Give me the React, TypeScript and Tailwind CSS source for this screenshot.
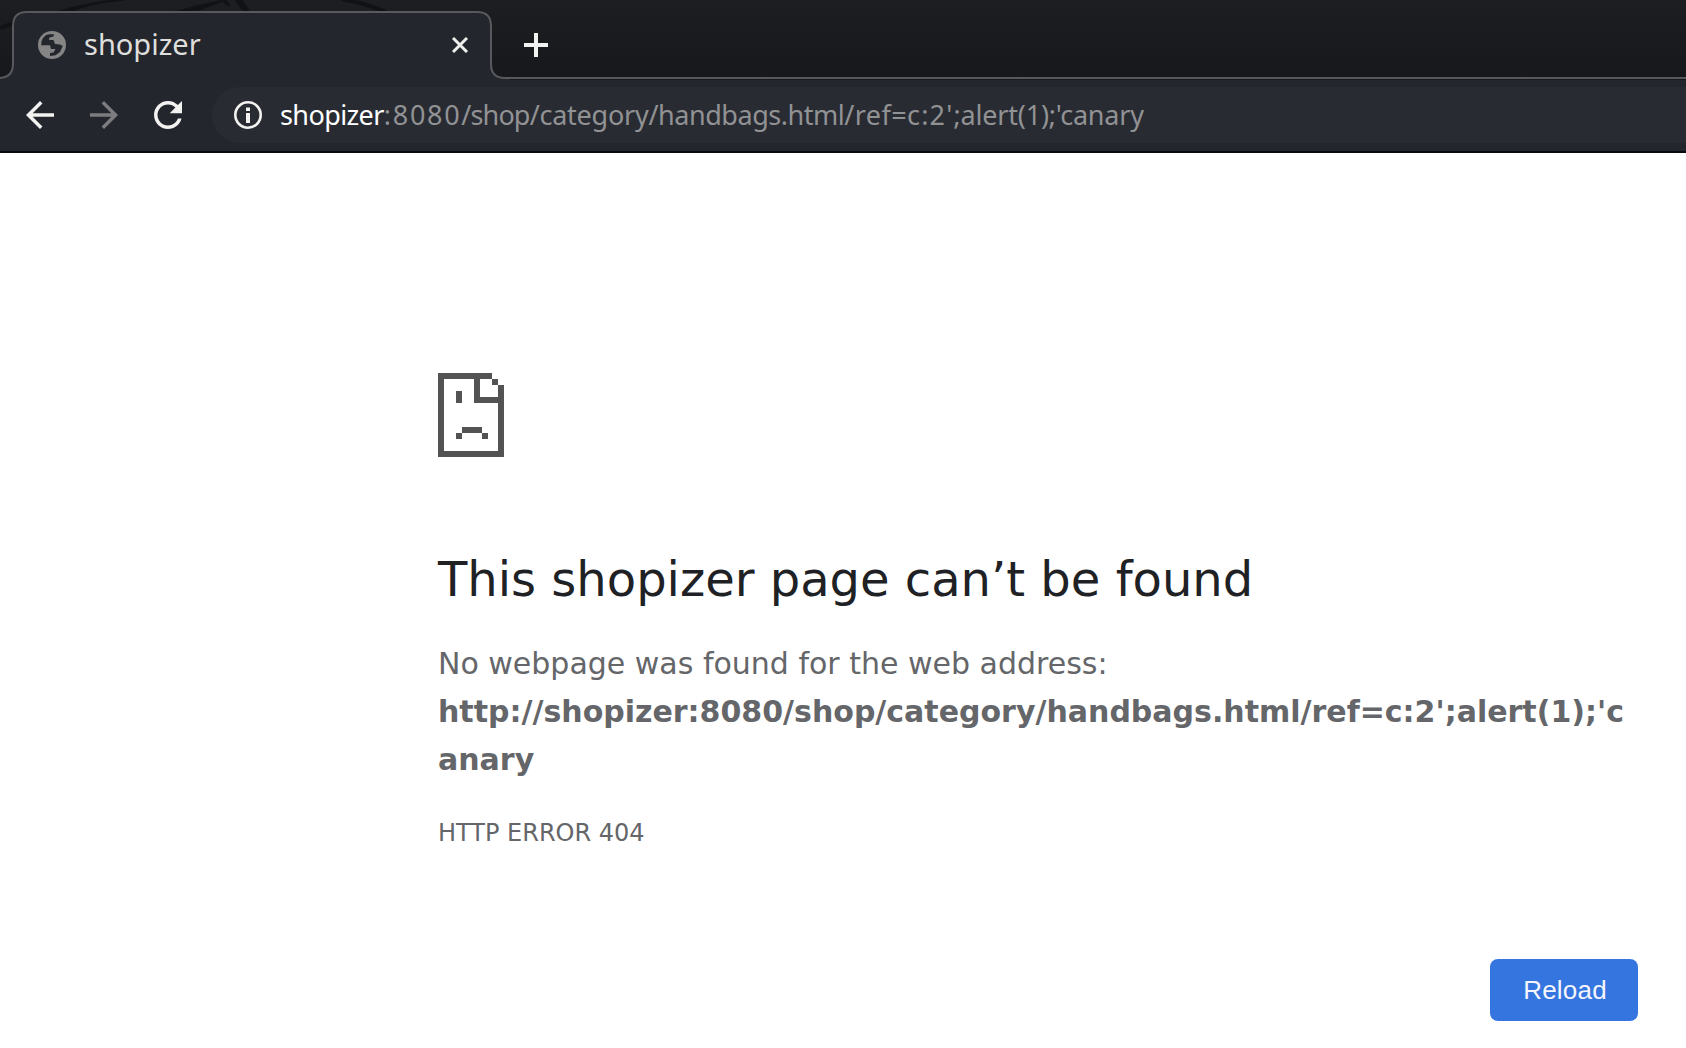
const STROKE = "#58595c";

function Wallpaper() {
  return (
    <svg className="absolute inset-0" width="520" height="80" viewBox="0 0 520 80" fill="none" aria-hidden="true">
      <path d="M0 28 L14 23" stroke="#111216" strokeWidth="4" />
      <path d="M58 12 Q90 2 135 -2 L105 2 Q80 6 70 12 Z" fill="#111216" stroke="#111216" strokeWidth="2" />
      <path d="M172 12 Q200 4 226 -1 L231 6 L228 6 L222 2 L195 12 Z" fill="#111216" />
      <path d="M237 -2 L247 12" stroke="#111216" strokeWidth="6" />
      <path d="M342 -1 Q368 4 386 12" stroke="#111216" strokeWidth="4" />
    </svg>
  );
}

function TabShape() {
  return (
    <svg className="absolute inset-0" width="510" height="80" viewBox="0 0 510 80" aria-hidden="true">
      <path
        d="M-2 78 H0 Q13 77 13 64 V26 Q13 12 27 12 H477 Q491 12 491 26 V64 Q491 78 505 78 H510 V80 H-2 Z"
        fill="#24262d"
      />
      <path
        d="M-2 78 H0 Q13 77 13 64 V26 Q13 12 27 12 H477 Q491 12 491 26 V64 Q491 78 505 78 H510"
        fill="none"
        stroke={STROKE}
        strokeWidth="2"
      />
    </svg>
  );
}

function Globe() {
  return (
    <svg width="28" height="28" viewBox="0 0 28 28" aria-hidden="true">
      <circle cx="14" cy="14" r="14" fill="#858585" />
      <path
        d="M5 7L8 4L11 3.2L16 3.2L15.5 5.5L11.5 6.5L11 9H15.5L17 13L22 13.5L24.8 15L22 21L17.5 24.2L12 25V22L15.5 21.5L17.5 18H13L12 14.2H3.2L3.6 10Z"
        fill="#24262d"
      />
    </svg>
  );
}

function Glyph({ d, color }: { d: string; color: string }) {
  return (
    <svg width="42" height="42" viewBox="0 0 24 24" fill={color} className="shrink-0" aria-hidden="true">
      <path d={d} />
    </svg>
  );
}

function SadPage() {
  return (
    <svg width="66" height="84" viewBox="0 0 66 84" fill="#535353" shapeRendering="crispEdges" aria-hidden="true">
      <path d="M0 0H54V6H6V78H60V12H66V84H0Z" />
      <path d="M54 6H60V12H54ZM36 6H42V24H60V30H36Z" />
      <path d="M18 18H24V30H18ZM24 54H44V60H24ZM18 60H24V66H18ZM44 60H50V66H44Z" />
    </svg>
  );
}

const URL_PARTS: [string, string][] = [
  ["shopizer", "tracking-[-0.6px] text-white"],
  [":8080", "tracking-[1.7px]"],
  ["/shop", "tracking-[-0.86px]"],
  ["/category", "tracking-[-0.24px]"],
  ["/handbags.html", "tracking-[-0.46px]"],
  ["/ref=", "tracking-[0.4px]"],
  ["c:2'", "tracking-[1.2px]"],
  [";alert(1);'", "tracking-[-0.2px]"],
  ["canary", "tracking-[-0.2px]"],
];

export default function App() {
  return (
    <div className="flex h-[1048px] w-[1686px] flex-col overflow-hidden bg-white">
      <header className="relative flex h-20 shrink-0 bg-linear-to-b from-[#1d1e22] to-[#17181c]">
        <Wallpaper />
        <div className="relative flex h-20 w-[510px] shrink-0">
          <TabShape />
          <div className="relative flex h-[90px] w-full items-center pl-[38px]">
            <Globe />
            <span className="mb-0.5 ml-[18px] font-['Noto_Sans',sans-serif] text-[29px] leading-[40px] text-[#dededc]">shopizer</span>
            <svg className="mr-[42px] ml-auto" width="16" height="16" viewBox="0 0 16 16" stroke="#eeeeec" strokeWidth="3" aria-hidden="true">
              <path d="M1 1L15 15M15 1L1 15" />
            </svg>
          </div>
        </div>
        <div className="relative flex flex-1 border-b-2 border-[#58595c] mb-px pl-[14px] pt-[33px]">
          <svg width="24" height="24" viewBox="0 0 24 24" fill="#f2f2f0" aria-hidden="true">
            <path d="M10 0H14V10H24V14H14V24H10V14H0V10H10Z" />
          </svg>
        </div>
      </header>

      <nav className="flex h-[73px] shrink-0 items-start border-b-2 border-[#08090d] bg-[#24262d] pt-[7px] pl-[19px]">
        <div className="flex h-14 items-center gap-[22px]">
          <Glyph color="#f2f2f0" d="M20 11H7.83l5.59-5.59L12 4l-8 8 8 8 1.41-1.41L7.83 13H20v-2z" />
          <Glyph color="#7c7c7f" d="M12 4l-1.41 1.41L16.17 11H4v2h12.17l-5.58 5.59L12 20l8-8z" />
          <Glyph
            color="#f2f2f0"
            d="M17.65 6.35C16.2 4.9 14.21 4 12 4c-4.42 0-7.99 3.58-7.99 8s3.57 8 7.99 8c3.73 0 6.84-2.55 7.73-6h-2.08c-.82 2.33-3.04 4-5.65 4-3.31 0-6-2.69-6-6s2.69-6 6-6c1.66 0 3.14.69 4.22 1.78L13 11h7V4l-2.35 2.35z"
          />
        </div>
        <div className="ml-[23px] flex h-14 flex-1 items-center rounded-l-full bg-[#292b33] pl-[22px] whitespace-nowrap">
          <svg width="28" height="28" viewBox="0 0 28 28" className="shrink-0" aria-hidden="true">
            <circle cx="14" cy="14" r="12.7" fill="none" stroke="#f2f2f0" strokeWidth="2.6" />
            <path d="M12 6.5H16V10H12ZM12 12H16V22H12Z" fill="#f2f2f0" />
          </svg>
          <div className="ml-[18px] font-['Noto_Sans',sans-serif] text-[27px] leading-[40px] text-[#919293]">
            {URL_PARTS.map(([text, style]) => (
              <span key={text} className={style}>{text}</span>
            ))}
          </div>
        </div>
      </nav>

      <main className="flex flex-1 flex-col pt-[220px] pl-[438px] font-['DejaVu_Sans',sans-serif] text-[#646669]">
        <SadPage />
        <h1 className="mt-[93px] text-[48px] leading-[58px] whitespace-nowrap text-[#202124]">This shopizer page can’t be found</h1>
        <p className="mt-[32px] w-[1200px] text-[30px] leading-[48px]">
          No webpage was found for the web address:
          <br />
          <strong className="font-bold break-all">http://shopizer:8080/shop/category/handbags.html/ref=c:2';alert(1);'canary</strong>
        </p>
        <p className="mt-[30px] text-[24px] leading-[38px]">HTTP ERROR 404</p>
        <button className="mt-[107px] mr-12 flex h-[62px] w-[148px] items-center justify-center self-end rounded-lg bg-[#3575e0] pl-0.5 font-['Liberation_Sans',sans-serif] text-[26px] leading-[30px] tracking-[0.2px] text-[#f4f6fb]">
          Reload
        </button>
      </main>
    </div>
  );
}
